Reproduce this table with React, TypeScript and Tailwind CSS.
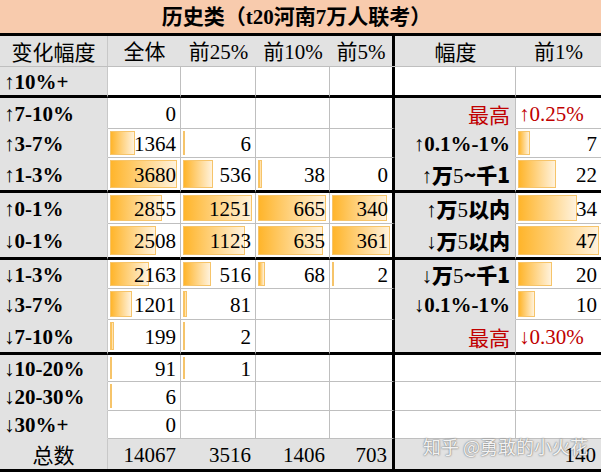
import React from "react";

type RCell = { label: React.ReactNode; val: React.ReactNode; red?: boolean; gray: boolean; num?: number };
type Row = {
  label: React.ReactNode;
  h: string;
  thick: boolean;
  vals: (number | null)[];
  r: RCell;
};

const MAX = [3680, 1251, 665, 361];
const BARMAX = [67, 69, 68, 58];
const RMAX = 47;

const up = <span className="font-normal">↑</span>;
const dn = <span className="font-normal">↓</span>;

const wan = (a: React.ReactNode, tail: React.ReactNode) => (
  <span className="font-bold">
    {a}
    <span className="font-['Noto_Sans_CJK_SC',sans-serif] font-black">万</span>
    <span className="font-normal">5</span>
    {tail}
  </span>
);

const empty: RCell = { label: "", val: "", gray: false };

const rows: Row[] = [
  { label: <>{up}10%+</>, h: "h-[31px]", thick: true, vals: [null, null, null, null], r: empty },
  {
    label: <>{up}7-10%</>,
    h: "h-[31px]",
    thick: false,
    vals: [0, null, null, null],
    r: { label: <span className="font-normal">最高</span>, val: "↑0.25%", red: true, gray: true },
  },
  {
    label: <>{up}3-7%</>,
    h: "h-[29px]",
    thick: false,
    vals: [1364, 6, null, null],
    r: { label: <>{up}0.1%-1%</>, val: 7, num: 7, gray: true },
  },
  {
    label: <>{up}1-3%</>,
    h: "h-[35px]",
    thick: true,
    vals: [3680, 536, 38, 0],
    r: {
      label: wan(up, <span className="font-['Noto_Sans_CJK_SC',sans-serif] font-black">~千1</span>),
      val: 22,
      num: 22,
      gray: true,
    },
  },
  {
    label: <>{up}0-1%</>,
    h: "h-[31px]",
    thick: false,
    vals: [2855, 1251, 665, 340],
    r: { label: wan(up, <span className="font-['Noto_Sans_CJK_SC',sans-serif] font-black">以内</span>), val: 34, num: 34, gray: true },
  },
  {
    label: <>{dn}0-1%</>,
    h: "h-[36px]",
    thick: true,
    vals: [2508, 1123, 635, 361],
    r: { label: wan(dn, <span className="font-['Noto_Sans_CJK_SC',sans-serif] font-black">以内</span>), val: 47, num: 47, gray: true },
  },
  {
    label: <>{dn}1-3%</>,
    h: "h-[29px]",
    thick: false,
    vals: [2163, 516, 68, 2],
    r: {
      label: wan(dn, <span className="font-['Noto_Sans_CJK_SC',sans-serif] font-black">~千1</span>),
      val: 20,
      num: 20,
      gray: true,
    },
  },
  {
    label: <>{dn}3-7%</>,
    h: "h-[31px]",
    thick: false,
    vals: [1201, 81, null, null],
    r: { label: <>{dn}0.1%-1%</>, val: 10, num: 10, gray: true },
  },
  {
    label: <>{dn}7-10%</>,
    h: "h-[35px]",
    thick: true,
    vals: [199, 2, null, null],
    r: { label: <span className="font-normal">最高</span>, val: "↓0.30%", red: true, gray: true },
  },
  { label: <>{dn}10-20%</>, h: "h-[27px]", thick: false, vals: [91, 1, null, null], r: empty },
  { label: <>{dn}20-30%</>, h: "h-[29px]", thick: false, vals: [6, null, null, null], r: empty },
  { label: <>{dn}30%+</>, h: "h-[28px]", thick: false, vals: [0, null, null, null], r: empty },
];

const W = ["w-[73px]", "w-[75px]", "w-[74px]", "w-[65px]"];
const BR = ["border-r border-r-[#BFBFBF]", "border-r border-r-[#BFBFBF]", "border-r border-r-[#BFBFBF]", "border-r-[3px] border-r-black"];

function Bar({ w }: { w: number }) {
  if (w <= 0) return null;
  return (
    <div
      className="absolute left-[2px] top-[2px] bottom-[2px] border border-[#F6C46A] bg-[linear-gradient(to_right,#FFB52B,#FFF2DC)]"
      style={{ width: Math.max(2, Math.round(w)) }}
    />
  );
}

export default function App() {
  return (
    <div className="relative w-[601px] h-[472px] overflow-hidden bg-white text-[21px] leading-none text-black font-['Liberation_Serif','Noto_Sans_CJK_SC',serif]">
      {/* title */}
      <div className="h-[36px] bg-[#F8CBAD] border-b-[3px] border-black flex items-center justify-center font-bold">
        <span className="mr-[8px]">
          <span className="font-['Noto_Sans_CJK_SC',sans-serif] font-bold">历史类（</span>
          t20
          <span className="font-['Noto_Sans_CJK_SC',sans-serif] font-bold">河南</span>7
          <span className="font-['Noto_Sans_CJK_SC',sans-serif] font-bold">万人联考）</span>
        </span>
      </div>

      {/* header */}
      <div className="flex h-[31px] bg-[#E2E2E2] border-b border-b-[#BFBFBF]">
        <div className="w-[108px] flex items-center justify-center border-r border-r-[#C8C8C8]">
          <span className="font-['Noto_Sans_CJK_SC',sans-serif] font-normal text-[21px]">变化幅度</span>
        </div>
        {["全体", "前25%", "前10%", "前5%"].map((t, i) => (
          <div key={t} className={`${W[i]} flex items-center justify-center ${i === 3 ? "border-r-[3px] border-r-black" : ""}`}>
            <span>
              <span className="font-['Noto_Sans_CJK_SC',sans-serif] font-normal">{t.slice(0, t === "全体" ? 2 : 1)}</span>
              {t === "全体" ? "" : t.slice(1)}
            </span>
          </div>
        ))}
        <div className="w-[121px] flex items-center justify-center">
          <span className="font-['Noto_Sans_CJK_SC',sans-serif] font-normal">幅度</span>
        </div>
        <div className="w-[85px] flex items-center justify-center">
          <span>
            <span className="font-['Noto_Sans_CJK_SC',sans-serif] font-normal">前</span>1%
          </span>
        </div>
      </div>

      {rows.map((row, ri) => {
        const bb = row.thick ? "border-b-[3px] border-b-black" : "border-b border-b-[#BFBFBF]";
        const bbGray = row.thick ? "border-b-[3px] border-b-black" : "border-b border-b-[#E2E2E2]";
        return (
          <div key={ri} className={`flex ${row.h}`}>
            <div className={`w-[108px] bg-[#E2E2E2] border-r border-r-[#C8C8C8] flex items-center pl-[4px] pt-[2px] font-bold ${bbGray}`}>
              {row.label}
            </div>
            {row.vals.map((v, ci) => (
              <div key={ci} className={`relative ${W[ci]} ${BR[ci]} ${bb} bg-white flex items-center justify-end pr-[4px] pt-[2px]`}>
                {v !== null && <Bar w={(v / MAX[ci]) * BARMAX[ci]} />}
                <span className="relative">{v !== null ? v : ""}</span>
              </div>
            ))}
            <div
              className={`w-[121px] border-r border-r-[#BFBFBF] flex items-center justify-end pr-[5px] pt-[2px] font-bold ${row.r.gray ? "bg-[#E2E2E2] " + bbGray : "bg-white " + bb} ${row.r.red ? "text-[#C00000]" : ""}`}
            >
              <span className={row.r.red ? "font-['Noto_Sans_CJK_SC',sans-serif] font-normal" : ""}>{row.r.label}</span>
            </div>
            <div
              className={`relative w-[85px] bg-white flex items-center pt-[2px] ${bb} ${row.r.red ? "justify-start pl-[3px] text-[#C00000]" : "justify-end pr-[4px]"}`}
            >
              {row.r.num !== undefined && <Bar w={(row.r.num / RMAX) * 81} />}
              <span className="relative">{row.r.val}</span>
            </div>
          </div>
        );
      })}

      {/* total */}
      <div className="flex h-[33px] bg-[#E2E2E2] border-b-[3px] border-b-black">
        <div className="w-[108px] flex items-center justify-center border-r border-r-[#C8C8C8]">
          <span className="font-['Noto_Sans_CJK_SC',sans-serif] font-normal">总数</span>
        </div>
        {[14067, 3516, 1406, 703].map((v, i) => (
          <div key={v} className={`${W[i]} flex items-center justify-end pr-[5px] pt-[2px] ${i === 3 ? "border-r-[3px] border-r-black" : ""}`}>
            {v}
          </div>
        ))}
        <div className="w-[121px]" />
        <div className="w-[85px] flex items-center justify-end pr-[5px] pt-[2px]">140</div>
      </div>

      {/* watermark */}
      <div className="absolute left-[423px] top-[437px] text-[18px] leading-none text-white/90 font-['Noto_Sans_CJK_SC',sans-serif] [text-shadow:0_0_2px_#777,0_0_1px_#777]">
        知乎 @勇敢的小火花
      </div>
    </div>
  );
}
